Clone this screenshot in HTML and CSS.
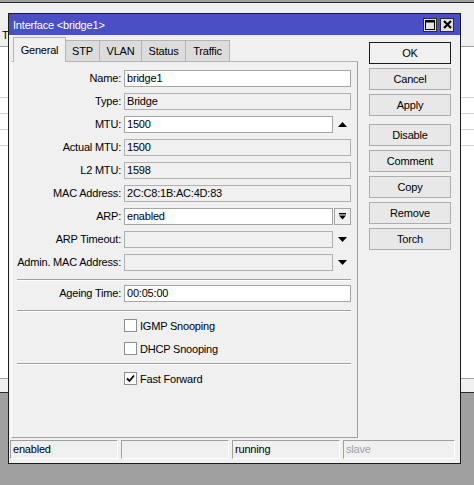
FILE: index.html
```html
<!DOCTYPE html>
<html lang="en">
  <head>
    <meta charset="UTF-8" />
    <meta name="viewport" content="width=device-width, initial-scale=1.0" />
    <title>Interface &lt;bridge1&gt;</title>
    <link rel="stylesheet" href="styles.css">
  </head>
  <body>
    <!-- list window sitting behind the dialog -->
    <div class="backwin">
      <div class="bw-toolbar"></div>
      <div class="bw-head"><span class="bw-col">T</span></div>
      <div class="bw-row tall"></div>
      <div class="bw-row"></div>
      <div class="bw-row"></div>
      <div class="bw-row"></div>
      <div class="bw-fill"></div>
      <div class="bw-foot"></div>
    </div>

    <div class="dialog">
      <div class="titlebar">
        <span class="title">Interface &lt;bridge1&gt;</span>
        <div class="tb-btns">
          <span class="tb-btn">
            <svg width="10" height="10" viewBox="0 0 10 10"><rect x="0.5" y="0.5" width="9" height="9" fill="none" stroke="#000" stroke-width="1"/><rect x="0" y="0" width="10" height="2.5" fill="#000"/></svg>
          </span>
          <span class="tb-btn">
            <svg width="9" height="9" viewBox="0 0 9 9"><path d="M1 1 L8 8 M8 1 L1 8" stroke="#000" stroke-width="2.2"/></svg>
          </span>
        </div>
      </div>

      <div class="dlg-body">
        <div class="tabarea">
          <div class="tabs">
            <div class="tab active">General</div>
            <div class="tab w-stp">STP</div>
            <div class="tab w-vlan">VLAN</div>
            <div class="tab w-status">Status</div>
            <div class="tab w-traffic">Traffic</div>
          </div>
          <div class="panel">
            <div class="form">
              <div class="lbl">Name:</div>
              <div class="field">bridge1</div>

              <div class="lbl">Type:</div>
              <div class="field ro">Bridge</div>

              <div class="lbl">MTU:</div>
              <div class="combo">
                <div class="field">1500</div>
                <span class="arrow">
                  <svg width="9" height="5" viewBox="0 0 9 5"><polygon points="0,5 4.5,0 9,5" fill="#000"/></svg>
                </span>
              </div>

              <div class="lbl">Actual MTU:</div>
              <div class="field ro">1500</div>

              <div class="lbl">L2 MTU:</div>
              <div class="field ro">1598</div>

              <div class="lbl">MAC Address:</div>
              <div class="field ro">2C:C8:1B:AC:4D:83</div>

              <div class="lbl">ARP:</div>
              <div class="combo">
                <div class="field">enabled</div>
                <span class="arrow boxed">
                  <svg width="7" height="7" viewBox="0 0 7 7"><rect x="0" y="0" width="7" height="1.4" fill="#000"/><polygon points="0,2.6 7,2.6 3.5,6.6" fill="#000"/></svg>
                </span>
              </div>

              <div class="lbl">ARP Timeout:</div>
              <div class="combo">
                <div class="field ro"></div>
                <span class="arrow">
                  <svg width="9" height="5" viewBox="0 0 9 5"><polygon points="0,0 9,0 4.5,5" fill="#000"/></svg>
                </span>
              </div>

              <div class="lbl">Admin. MAC Address:</div>
              <div class="combo">
                <div class="field ro"></div>
                <span class="arrow">
                  <svg width="9" height="5" viewBox="0 0 9 5"><polygon points="0,0 9,0 4.5,5" fill="#000"/></svg>
                </span>
              </div>
            </div>

            <div class="sep-line"></div>

            <div class="form single">
              <div class="lbl">Ageing Time:</div>
              <div class="field">00:05:00</div>
            </div>

            <div class="sep-line"></div>

            <div class="check first"><span class="box"></span>IGMP Snooping</div>
            <div class="check"><span class="box"></span>DHCP Snooping</div>

            <div class="sep-line"></div>

            <div class="check first">
              <span class="box">
                <svg width="9" height="9" viewBox="0 0 9 9"><path d="M1 4.5 L3.5 7 L8 1.5" fill="none" stroke="#000" stroke-width="1.8"/></svg>
              </span>Fast Forward
            </div>
          </div>
        </div>

        <div class="actions">
          <button class="btn default">OK</button>
          <button class="btn">Cancel</button>
          <button class="btn">Apply</button>
          <button class="btn gap">Disable</button>
          <button class="btn">Comment</button>
          <button class="btn">Copy</button>
          <button class="btn">Remove</button>
          <button class="btn">Torch</button>
        </div>
      </div>

      <div class="statusbar">
        <div class="cell">enabled</div>
        <div class="cell"></div>
        <div class="cell">running</div>
        <div class="cell last">slave</div>
      </div>
    </div>
  </body>
</html>
```

FILE: styles.css
```css
* {
  box-sizing: border-box;
}
body {
  margin: 0;
  width: 474px;
  height: 485px;
  overflow: hidden;
  position: relative;
  background: #a0a0a0;
  font-family: "Liberation Sans", Arial, sans-serif;
  font-size: 11px;
  letter-spacing: -0.2px;
  color: #000;
}

/* window behind */
.backwin {
  position: absolute;
  left: -3px;
  top: 2px;
  width: 482px;
  height: 391px;
  background: #fff;
  border: 1px solid #2a2a2a;
  display: flex;
  flex-direction: column;
}
.bw-toolbar {
  height: 22px;
  background: #f0f0f0;
}
.bw-head {
  height: 22px;
  background: #f0f0f0;
  border-bottom: 1px solid #a0a0a0;
  line-height: 21px;
  overflow: hidden;
}
.bw-col {
  margin-left: 4px;
}
.bw-row {
  height: 16px;
  border-bottom: 1px solid #d4d4d4;
}
.bw-row.tall {
  height: 51px;
}
.bw-fill {
  flex: 1;
}
.bw-foot {
  height: 14px;
  background: #f0f0f0;
  border-top: 1px solid #a0a0a0;
}

/* dialog */
.dialog {
  position: absolute;
  left: 8px;
  top: 13px;
  width: 453px;
  height: 451px;
  border: 1px solid #1c1c1c;
  background: #f0f0f0;
  display: flex;
  flex-direction: column;
}
.titlebar {
  height: 21px;
  background: #4a4fc6;
  color: #fff;
  display: flex;
  align-items: center;
  padding: 0 6px 0 4px;
}
.tb-btns {
  margin-left: auto;
  display: flex;
  gap: 3px;
}
.tb-btn {
  width: 14px;
  height: 14px;
  background: #e2e2e2;
  border: 1px solid #2c2c2c;
  display: flex;
  align-items: center;
  justify-content: center;
}

.dlg-body {
  display: flex;
  height: 403px;
}
.tabarea {
  width: 349px;
  padding-left: 2px;
  display: flex;
  flex-direction: column;
}
.tabs {
  display: flex;
  align-items: flex-end;
  height: 26px;
  padding-left: 2px;
}
.tab {
  height: 21px;
  width: 35px;
  margin-left: -1px;
  border: 1px solid #b4b4b4;
  border-bottom: none;
  background: #dcdcdc;
  text-align: center;
  line-height: 21px;
}
.tab.active {
  width: 53px;
  height: 25px;
  margin-left: 0;
  margin-bottom: -1px;
  background: #f0f0f0;
  line-height: 24px;
  position: relative;
  z-index: 1;
}
.tab.w-vlan {
  width: 43px;
}
.tab.w-status,
.tab.w-traffic {
  width: 45px;
}

.panel {
  flex: 1;
  border: 1px solid #a0a0a0;
  border-top-color: #b4b4b4;
  border-left-color: #fff;
  background: #f0f0f0;
  padding: 8px 6px 0 0;
}
.form {
  display: grid;
  grid-template-columns: 109px 1fr;
  grid-auto-rows: 17px;
  column-gap: 3px;
  row-gap: 6px;
}
.form.single {
  margin-top: 4px;
}
.lbl {
  text-align: right;
  line-height: 17px;
  white-space: nowrap;
}
.field {
  border: 1px solid #a5a5a5;
  background: #fff;
  line-height: 15px;
  padding: 0 2px;
  white-space: nowrap;
  overflow: hidden;
}
.field.ro {
  background: #f0f0f0;
  border-color: #b0b0b0;
}
.combo {
  display: flex;
  gap: 1px;
}
.combo .field {
  flex: 1;
}
.arrow {
  width: 17px;
  display: flex;
  align-items: center;
  justify-content: center;
}
.arrow.boxed {
  border: 1px solid #a5a5a5;
  background: #f0f0f0;
}

.sep-line {
  margin: 8px 0 0 5px;
  border-top: 1px solid #a0a0a0;
  border-bottom: 1px solid #fff;
}
.check {
  display: flex;
  align-items: center;
  gap: 3px;
  height: 13px;
  margin-top: 10px;
  padding-left: 112px;
}
.check.first {
  margin-top: 7px;
}
.box {
  width: 13px;
  height: 13px;
  border: 1px solid #8e8e8e;
  background: #fff;
  display: flex;
  align-items: center;
  justify-content: center;
}

.actions {
  width: 82px;
  margin-left: 11px;
  padding-top: 7px;
  display: flex;
  flex-direction: column;
  gap: 4px;
}
.btn {
  height: 22px;
  margin: 0;
  padding: 0;
  border: 1px solid #adadad;
  background: #e8e8e8;
  font: inherit;
  letter-spacing: inherit;
  color: #000;
}
.btn.default {
  border-color: #1a1a1a;
  background: #f0f0f0;
}
.btn.gap {
  margin-top: 4px;
}

.statusbar {
  display: flex;
  gap: 3px;
  height: 19px;
  margin-top: 2px;
  padding: 0 5px 0 1px;
}
.cell {
  width: 108px;
  border: 1px solid;
  border-color: #a0a0a0 #fff #fff #a0a0a0;
  padding-left: 2px;
  line-height: 17px;
}
.cell.last {
  flex: 1;
  color: #a0a0a0;
}
```
